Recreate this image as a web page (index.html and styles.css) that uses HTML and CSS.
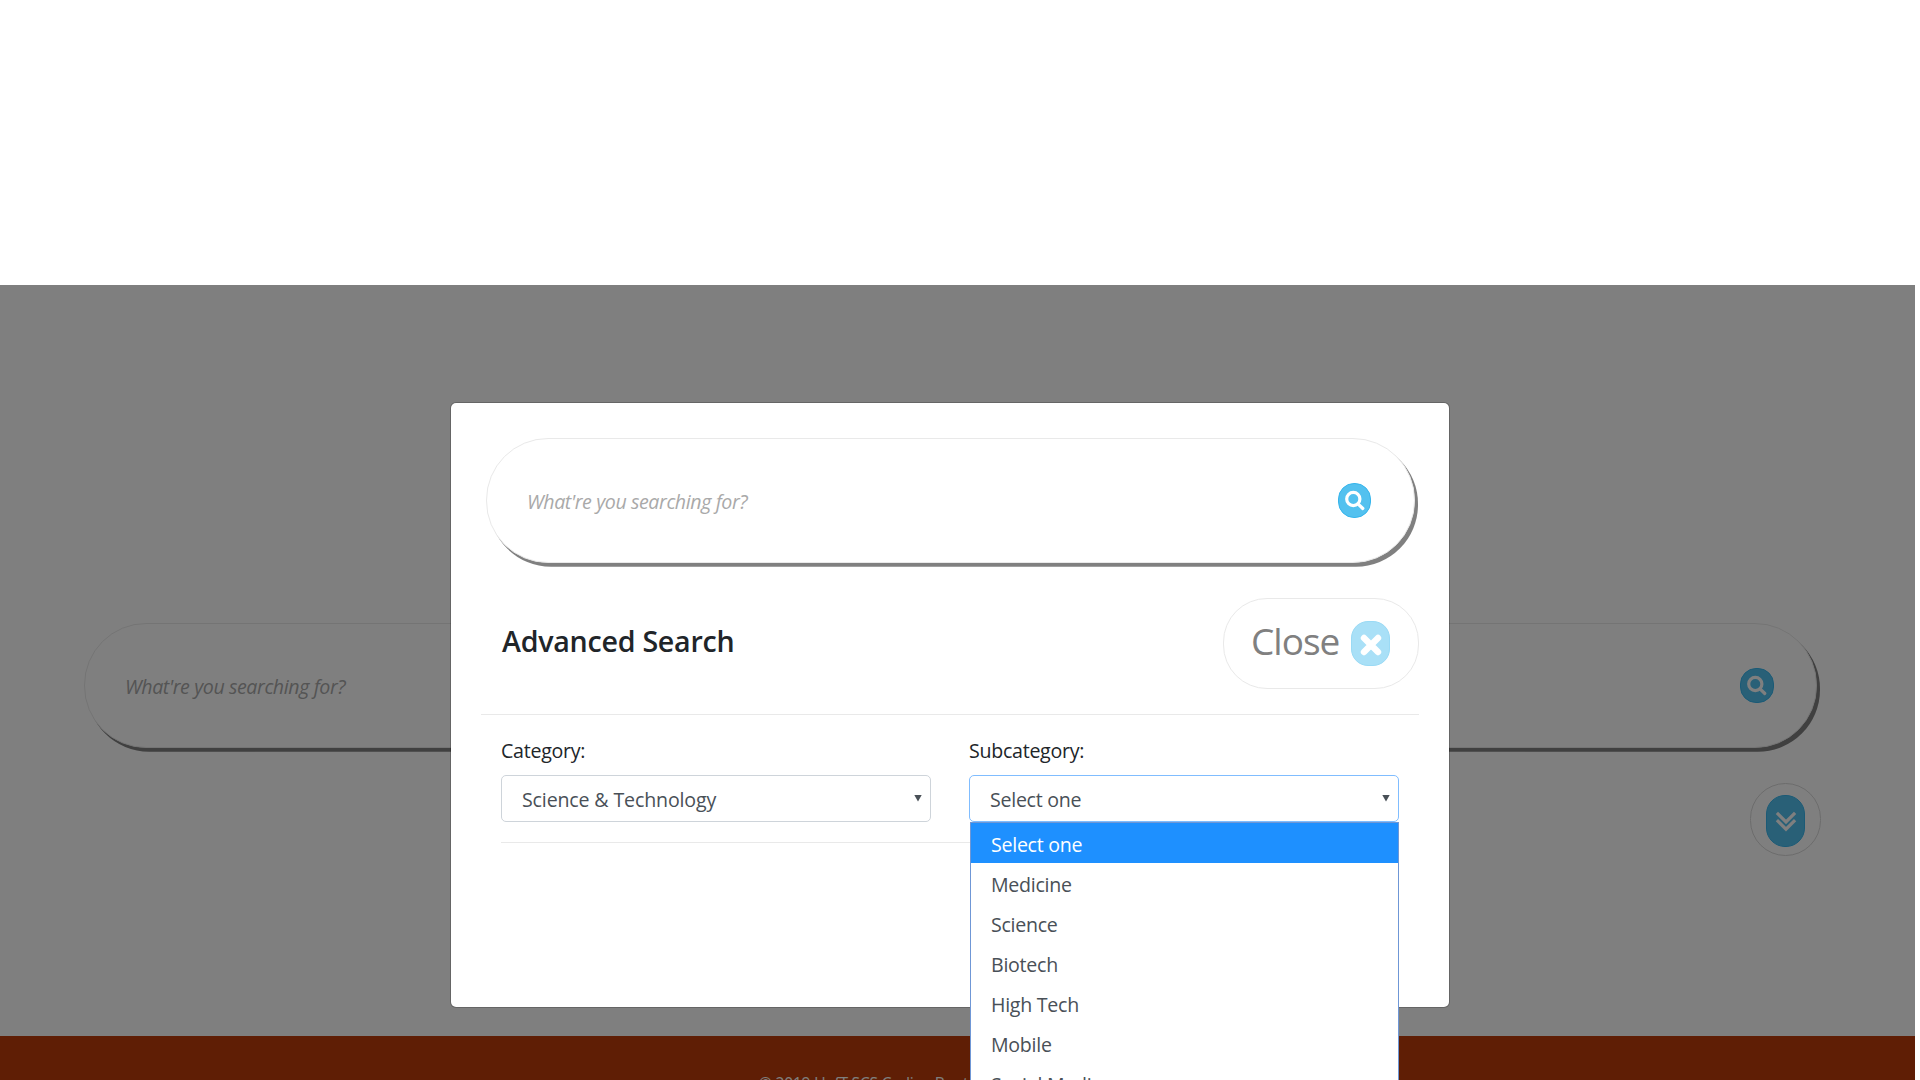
FILE: index.html
```html
<!DOCTYPE html>
<html lang="en">
<head>
<meta charset="utf-8">
<title>Advanced Search</title>
<link rel="stylesheet" href="styles.css">
</head>
<body>
<div class="page">
  <main class="content">
    <div class="search-bar">
      <span class="placeholder">What're you searching for?</span>
      <span class="badge badge-search"><svg viewBox="0 0 20 20"><circle cx="8.3" cy="8" r="6.6"/><path d="M13 12.8L17.8 17.5"/></svg></span>
    </div>
    <div class="expand"><span class="badge badge-expand"><svg viewBox="0 0 24 22"><path d="M2 2l10 10L22 2M2 10l10 10 10-10"/></svg></span></div>
  </main>
  <footer class="footer"><span class="footer-text">© 2019 UofT SCS Coding Boot</span></footer>
</div>
<div class="backdrop"></div>
<div class="modal">
  <div class="search-bar">
    <span class="placeholder">What're you searching for?</span>
    <span class="badge badge-search"><svg viewBox="0 0 20 20"><circle cx="8.3" cy="8" r="6.6"/><path d="M13 12.8L17.8 17.5"/></svg></span>
  </div>
  <div class="modal-head">
    <h1 class="title"><span>Advanced Search</span></h1>
    <div class="close"><span class="close-text">Close</span><span class="badge badge-close"><svg viewBox="0 0 22 22"><path d="M4 4l14 14M18 4L4 18"/></svg></span></div>
  </div>
  <div class="fields">
    <div class="field">
      <label class="label"><span>Category:</span></label>
      <div class="select"><span class="value science">Science &amp; Technology</span><i class="arrow"></i></div>
    </div>
    <div class="field">
      <label class="label"><span>Subcategory:</span></label>
      <div class="select focused"><span class="value">Select one</span><i class="arrow"></i>
        <ul class="menu">
          <li class="active"><span>Select one</span></li>
          <li><span>Medicine</span></li>
          <li><span>Science</span></li>
          <li><span>Biotech</span></li>
          <li><span>High Tech</span></li>
          <li><span>Mobile</span></li>
          <li><span>Social Media</span></li>
        </ul>
      </div>
    </div>
  </div>
</div>
</body>
</html>
```
FILE: styles.css
```css
* { box-sizing: border-box; }
html, body { margin: 0; height: 1080px; overflow: hidden; background: #fff; }
body { font-family: "Open Sans", "Noto Sans", sans-serif; font-size: 19.6px; letter-spacing: -.27px; color: #212529; position: relative; }

.page { height: 1080px; width: 1915px; display: flex; flex-direction: column; overflow: hidden; }
.content { flex: none; height: 1036px; padding: 623px 94px 0 84px; display: flex; flex-direction: column; align-items: flex-end; gap: 35px; }
.footer { flex: 1; background: #bf3c0a; padding: 36px 0 0 759px; color: #fff; }
.footer-text { display: block; font-size: 15.6px; letter-spacing: -.23px; line-height: 22px; white-space: nowrap; }

.search-bar { width: 100%; height: 125px; border: 1px solid #e9e9e9; border-radius: 62px; background: #fff; box-shadow: 3px 3.75px 0 #808080; padding: 0 43px 0 40px; display: flex; align-items: center; justify-content: space-between; }
.content .search-bar { width: 1733px; margin-right: 4px; padding-right: 42px; }
.placeholder { font-style: italic; color: #a9a9a9; font-size: 19.6px; letter-spacing: -.4px; line-height: 26px; padding-top: 3px; }
.badge { display: flex; align-items: center; justify-content: center; background: #53c1ef; border: 1px solid #36b5ec; }
.badge svg { fill: none; stroke: #fff; display: block; overflow: visible; }
.badge-search { width: 33px; height: 35px; border-radius: 16px; }
.content .badge-search { width: 34px; }
.badge-search svg { width: 20px; height: 20px; stroke-width: 3.2; stroke-linecap: round; margin-left: 1px; margin-top: 1px; }
.content .badge-search svg { margin-left: 0; }
.expand { width: 71px; height: 73px; border: 1px solid #d8d8d8; border-radius: 36px; display: flex; align-items: center; justify-content: center; }
.badge-expand { width: 39px; height: 52px; border-radius: 19px; margin-top: 3px; }
.badge-expand svg { width: 22px; height: 20px; stroke-width: 3.5; }

.backdrop { position: absolute; left: 0; top: 285px; width: 1915px; height: 795px; background: rgba(0, 0, 0, .5); }

.modal { position: absolute; left: 450px; top: 402px; width: 1000px; height: 606px; background: #fff; background-clip: padding-box; border: 1px solid rgba(0, 0, 0, .2); border-radius: 6px; padding: 35px 30px 0; }
.modal .search-bar { width: 929px; margin-left: 5px; }
.modal-head { display: flex; justify-content: space-between; align-items: flex-start; height: 152px; padding: 35px 0 0 20px; border-bottom: 1px solid #e9e9e9; }
.title { margin: 23px 0 0 1px; font-size: 28.6px; letter-spacing: -.25px; line-height: 40px; font-weight: 600; }
.close { width: 196px; height: 91px; border: 1px solid #e9e9e9; border-radius: 44px; display: flex; align-items: center; padding-left: 27px; color: #808080; }
.close-text { font-size: 37px; letter-spacing: -1px; line-height: 50px; font-weight: 400; width: 100px; margin-top: -5px; }
.badge-close { width: 39px; height: 45px; border-radius: 17px; background: #a9e0f7; border-color: #9adaf5; }
.badge-close svg { width: 22px; height: 22px; stroke-width: 6.4; margin-top: 3px; stroke-linecap: round; }

.fields { margin: 0 20px; height: 128px; padding-top: 22px; display: grid; grid-template-columns: 430px 430px; column-gap: 38px; border-bottom: 1px solid #e9e9e9; }
.label { display: block; height: 38px; line-height: 28px; }
.select { position: relative; height: 47px; border: 1px solid #ced4da; border-radius: 5px; padding: 1px 8px 0 20px; display: flex; align-items: center; justify-content: space-between; color: #495057; }
.science { letter-spacing: -.15px; }
.focused { border-color: #80bdff; }
.arrow { width: 8px; height: 7px; background: #495057; clip-path: polygon(0 0, 100% 0, 50% 100%); margin-top: -2px; }
.menu { position: absolute; z-index: 2; top: 46px; left: 0; width: 429px; height: 259px; margin: 0; padding: 0; list-style: none; background: #fff; border: 1px solid #6f97d6; overflow: hidden; }
.menu li { height: 40px; line-height: 43px; padding-left: 20px; }
.menu .active { background: #1e90ff; color: #fff; }
```
